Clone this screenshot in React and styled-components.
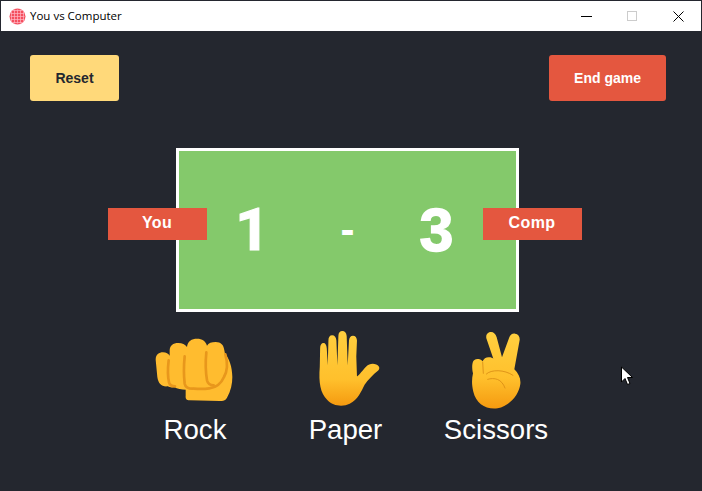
import React from "react";
import styled, { createGlobalStyle } from "styled-components";

const Global = createGlobalStyle`
  html, body { margin: 0; padding: 0; background: #24272f; }
  * { box-sizing: border-box; }
`;

const Page = styled.div`
  position: relative;
  width: 702px;
  height: 491px;
  overflow: hidden;
  background: #24272f;
  padding: 1px 1px 0;
  font-family: "Liberation Sans", Arial, sans-serif;
`;

const TitleBar = styled.header`
  height: 30px;
  background: #fff;
  display: flex;
  align-items: center;
  padding-left: 8px;
`;

const AppIcon = styled.svg`
  width: 17px;
  height: 17px;
  flex: none;
`;

const TitleText = styled.span`
  margin-left: 4px;
  padding-bottom: 1px;
  font: 11.5px "Open Sans", sans-serif;
  color: #000;
  flex: 1;
`;

const WindowButton = styled.div`
  width: 46px;
  height: 30px;
  display: grid;
  place-items: center;
`;

const Toolbar = styled.div`
  display: flex;
  justify-content: space-between;
  padding: 24px 35px 0 29px;
`;

const ActionButton = styled.button`
  width: ${(p) => p.$width}px;
  height: 46px;
  border: 0;
  border-radius: 3px;
  padding: 0;
  background: ${(p) => p.$bg};
  color: ${(p) => p.$fg};
  font: bold 14px "Liberation Sans", Arial, sans-serif;
`;

const ScoreRow = styled.section`
  display: flex;
  justify-content: center;
  align-items: center;
  margin-top: 47px;
  padding-right: 13px;
`;

const NameTag = styled.div`
  position: relative;
  z-index: 1;
  width: 99px;
  height: 32px;
  margin-bottom: 12px;
  background: #e4573f;
  color: #fff;
  font-size: 16px;
  font-weight: bold;
  letter-spacing: 0.4px;
  display: flex;
  align-items: center;
  justify-content: center;
  padding-bottom: 3px;
  margin-left: ${(p) => (p.$side === "right" ? "-36px" : "0")};
  margin-right: ${(p) => (p.$side === "left" ? "-31px" : "0")};
`;

const ScoreBoard = styled.div`
  width: 343px;
  height: 164px;
  background: #84c96b;
  border: 3px solid #fff;
  display: grid;
  grid-template-columns: 148px 42px 136px;
  align-items: center;
  justify-items: center;
  color: #fff;
  font-weight: bold;
  line-height: 1;
`;

const ScoreValue = styled.span`
  display: block;
  font-family: ${(p) => p.$family || '"Liberation Sans", Arial, sans-serif'};
  font-size: ${(p) => p.$size}px;
  -webkit-text-stroke: ${(p) => p.$stroke}px #fff;
`;

const ChoiceRow = styled.section`
  display: grid;
  grid-template-columns: repeat(3, 150.5px);
  justify-content: center;
  margin-top: 14px;
  padding-right: 11px;
`;

const Choice = styled.div`
  display: flex;
  flex-direction: column;
  align-items: center;
  color: #fff;
  font-size: 27.6px;
  line-height: 31px;
`;

const EmojiSlot = styled.div`
  height: 88px;
  display: flex;
  align-items: flex-start;
  justify-content: center;
  padding-top: ${(p) => p.$top}px;
  padding-left: ${(p) => p.$left || 0}px;
`;

const ChoiceLabel = styled.span`
  display: block;
`;

const Cursor = styled.svg`
  position: absolute;
  left: 620px;
  top: 366px;
  width: 14px;
  height: 21px;
`;

const Fist = () => (
  <svg width="80" height="64" viewBox="46 53 240 192">
    <path
      fill="#ffbc2f"
      d="M48 118C48 102 58 96 70 96C80 96 86 100 90 106L90 90C90 76 100 68 116 68C128 68 136 72 142 80C144 62 156 55 172 55C188 55 198 62 202 76C206 68 216 65 228 65C244 65 252 74 254 90L256 100C268 112 278 140 278 170C278 190 274 212 262 232C258 240 250 242 240 242L150 240C140 240 137 234 138 226L138 208C126 207 112 206 104 200C98 202 90 202 84 198C66 200 56 190 53 170Z"
    />
    <g fill="none" stroke="#e8971c" strokeWidth="8" strokeLinecap="round">
      <path d="M87 120c-3 25-3 48 1 66 2 8 8 12 18 12" />
      <path d="M135 108c-3 30-3 56 0 82 2 10 10 15 24 15" />
      <path d="M200 96c-3 30-2 60 2 84 2 9 8 15 20 15" />
      <path d="M257 102c7 24 6 50-4 68-8 18-24 32-44 34-14 2-30 2-46 1" />
    </g>
  </svg>
);

const Hand = () => (
  <svg width="64" height="77" viewBox="52 30 192 232">
    <defs>
      <linearGradient id="hand" x1="0" y1="0" x2="0" y2="1">
        <stop offset="0" stopColor="#ffcf3f" />
        <stop offset="0.65" stopColor="#ffc02c" />
        <stop offset="1" stopColor="#f59a10" />
      </linearGradient>
    </defs>
    <path
      fill="url(#hand)"
      d="M60 140L61 85C61 75 65 69 71 69C77 69 80 75 81 85L84 136L86 62C86 52 90 46 97 46C105 46 109 52 110 62L113 136L116 48C116 38 121 33 128 33C135 33 140 38 141 48L144 136L148 62C149 52 153 47 160 47C167 47 172 53 172 62L170 110L172 170C180 165 190 150 200 140C208 132 220 130 230 134C240 138 242 146 236 152C220 165 205 180 195 195C185 215 175 240 150 252C130 262 100 260 82 240C62 220 56 190 60 140Z"
    />
  </svg>
);

const Peace = () => (
  <svg width="50" height="78" viewBox="90 33 150 234">
    <defs>
      <linearGradient id="peace" x1="0" y1="0" x2="0" y2="1">
        <stop offset="0" stopColor="#ffd040" />
        <stop offset="0.6" stopColor="#ffc02c" />
        <stop offset="1" stopColor="#f59a10" />
      </linearGradient>
    </defs>
    <path
      fill="url(#peace)"
      d="M136 55C134 42 142 36 150 36C158 36 164 42 167 52L183 112L205 52C208 44 214 40 222 41C232 42 237 50 236 60L220 148C232 160 240 175 238 192C234 225 205 258 170 265C135 270 105 250 97 215C92 195 92 178 96 160C93 150 93 135 95 128C97 120 104 116 112 117C118 117 122 120 125 124C128 116 136 111 145 112C150 112 154 114 157 116Z"
    />
    <g fill="none" stroke="#d98c14" strokeWidth="2.5" strokeLinecap="round">
      <path d="M125 126l2 34" />
      <path d="M136 162C150 148 190 148 216 166" />
      <path d="M140 178C160 172 182 176 192 204" />
    </g>
  </svg>
);

const grid = [2, 5, 8, 11, 14];

const Dots = () => (
  <g fill="#ffb6c4">
    {grid.map((p) => (
      <React.Fragment key={p}>
        <rect x={p} y="1.5" width="1" height="14" opacity="0.7" />
        <rect x="1.5" y={p} width="14" height="1" opacity="0.7" />
      </React.Fragment>
    ))}
  </g>
);

export default function App() {
  return (
    <Page>
      <Global />
      <TitleBar>
        <AppIcon viewBox="0 0 17 17">
          <defs>
            <clipPath id="globe"><circle cx="8.5" cy="8.5" r="8" /></clipPath>
          </defs>
          <circle cx="8.5" cy="8.5" r="8" fill="#f4505f" />
          <g clipPath="url(#globe)"><Dots /></g>
        </AppIcon>
        <TitleText>You vs Computer</TitleText>
        <WindowButton>
          <svg width="11" height="1" viewBox="0 0 11 1"><rect width="11" height="1" fill="#000" /></svg>
        </WindowButton>
        <WindowButton>
          <svg width="10" height="10" viewBox="0 0 10 10"><rect x=".5" y=".5" width="9" height="9" fill="none" stroke="#ccc" /></svg>
        </WindowButton>
        <WindowButton>
          <svg width="11" height="11" viewBox="0 0 11 11"><path d="M.5.5l10 10M10.5.5l-10 10" stroke="#000" fill="none" /></svg>
        </WindowButton>
      </TitleBar>

      <Toolbar>
        <ActionButton $width={89} $bg="#ffd97a" $fg="#24272f">Reset</ActionButton>
        <ActionButton $width={117} $bg="#e4573f" $fg="#fff">End game</ActionButton>
      </Toolbar>

      <ScoreRow>
        <NameTag $side="left">You</NameTag>
        <ScoreBoard>
          <ScoreValue $family='Roboto, sans-serif' $size={60} $stroke={1.2}>1</ScoreValue>
          <ScoreValue $size={42} $stroke={0}>-</ScoreValue>
          <ScoreValue $size={61} $stroke={1.5}>3</ScoreValue>
        </ScoreBoard>
        <NameTag $side="right">Comp</NameTag>
      </ScoreRow>

      <ChoiceRow>
        <Choice>
          <EmojiSlot $top={12}><Fist /></EmojiSlot>
          <ChoiceLabel>Rock</ChoiceLabel>
        </Choice>
        <Choice>
          <EmojiSlot $top={4} $left={7}><Hand /></EmojiSlot>
          <ChoiceLabel>Paper</ChoiceLabel>
        </Choice>
        <Choice>
          <EmojiSlot $top={5}><Peace /></EmojiSlot>
          <ChoiceLabel>Scissors</ChoiceLabel>
        </Choice>
      </ChoiceRow>

      <Cursor viewBox="0 0 14 21">
        <path d="M1.5 1v15l3.5-3.5 2.5 6 2.5-1-2.5-6h5z" fill="#fff" stroke="#000" strokeWidth="1" />
      </Cursor>
    </Page>
  );
}
